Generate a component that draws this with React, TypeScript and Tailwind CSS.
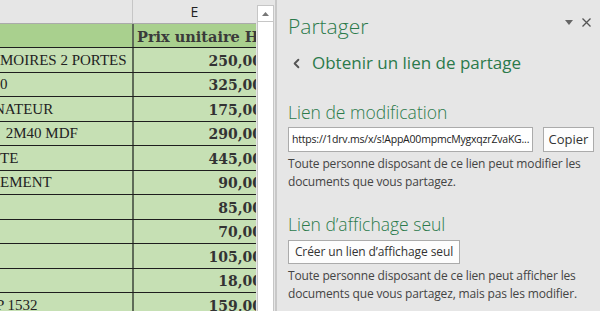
import React from 'react';
import { ChevronLeft } from 'lucide-react';

const serif = { fontFamily: '"DejaVu Serif", "Liberation Serif", serif' };
const times = { fontFamily: '"Liberation Serif", "DejaVu Serif", serif' };
const ui = { fontFamily: '"Open Sans", "Noto Sans", sans-serif' };

const rows = [
    { left: 'MOIRES 2 PORTES', shift: 'ml-0', price: '250,00', h: 'h-[25px]' },
    { left: '0', shift: 'ml-0', price: '325,00', h: 'h-[24px]' },
    { left: 'NATEUR', shift: 'ml-[-6px]', price: '175,00', h: 'h-[25px]' },
    { left: ' 2M40 MDF', shift: 'ml-[2px]', price: '290,00', h: 'h-[24px]' },
    { left: 'TE', shift: 'ml-0', price: '445,00', h: 'h-[25px]' },
    { left: 'EMENT', shift: 'ml-0', price: '90,00', h: 'h-[24px]' },
    { left: '', shift: 'ml-0', price: '85,00', h: 'h-[25px]' },
    { left: '', shift: 'ml-0', price: '70,00', h: 'h-[24px]' },
    { left: '', shift: 'ml-0', price: '105,00', h: 'h-[25px]' },
    { left: '', shift: 'ml-0', price: '18,00', h: 'h-[24px]' },
    { left: 'P 1532', shift: 'ml-[-4px]', price: '159,00', h: 'h-[25px]' },
];

const Sheet: React.FC = () => (
    <div className="w-[256px] shrink-0 flex flex-col">
        <div className="h-[24px] shrink-0 flex border-b border-[#ababab] bg-[#e6e6e6]">
            <div className="w-[133px] border-r border-[#c6c6c6]" />
            <div className="flex-1 flex items-center justify-center text-[14px] text-[#222]" style={ui}>E</div>
        </div>
        <div className="h-[24px] shrink-0 flex border-b border-[#1e1e1e] bg-[#a9d08e]">
            <div className="w-[132px]" />
            <div className="w-[2px] bg-[#5e6b58]" />
            <div className="flex-1 overflow-hidden flex items-end pb-[3px] pl-[3px]">
                <span className="whitespace-nowrap font-bold text-[14.5px] text-[#3a3a3a] leading-none" style={serif}>Prix unitaire HT</span>
            </div>
        </div>
        {rows.map((r, i) => (
            <div key={i} className={`${r.h} shrink-0 flex border-b border-[#1e1e1e] bg-[#c6e0b4]`}>
                <div className="w-[132px] overflow-hidden flex items-end pb-[4px]">
                    <span className={`${r.shift} whitespace-pre text-[15px] text-[#222] leading-none`} style={times}>{r.left}</span>
                </div>
                <div className="w-[2px] bg-[#5e6b58]" />
                <div className="flex-1 overflow-hidden flex items-end pb-[4px]">
                    <div className="w-[128px] shrink-0 text-right font-bold text-[14px] text-[#333] leading-none" style={serif}>{r.price}</div>
                </div>
            </div>
        ))}
    </div>
);

const Panel: React.FC = () => (
    <div className="flex-1 flex flex-col pl-[11px] pr-[7px] text-[#444]" style={ui}>
        <div className="flex items-start justify-between h-[46px] pt-[12px]">
            <div className="text-[21px] font-light leading-[28px] text-[#2b7a4b]">Partager</div>
            <div className="flex items-center gap-[9px] pt-[6px] pr-[3px]">
                <svg width="8" height="5" viewBox="0 0 8 5"><path d="M0 0h8L4 5z" fill="#666" /></svg>
                <svg width="9" height="9" viewBox="0 0 9 9"><path d="M0.5 0.5l8 8M8.5 0.5l-8 8" stroke="#555" strokeWidth="1.3" /></svg>
            </div>
        </div>
        <div className="mt-[3px] flex items-center h-[28px]">
            <ChevronLeft className="w-[15px] h-[15px] ml-[1px] text-[#555]" strokeWidth={3} />
            <span className="ml-[8px] text-[17px] leading-[24px] text-[#2b7a4b]">Obtenir un lien de partage</span>
        </div>
        <div className="mt-[22px] text-[17.5px] font-light leading-[26px] text-[#2b7a4b]">Lien de modification</div>
        <div className="mt-[2px] flex gap-[10px]">
            <div className="w-[245px] h-[25px] bg-white border border-[#ababab] flex items-center pl-[3px] overflow-hidden">
                <span className="whitespace-nowrap text-[10.5px] tracking-[-0.2px] text-[#222]">https://1drv.ms/x/s!AppA00mpmcMygxqzrZvaKG...</span>
            </div>
            <div className="w-[51px] h-[25px] bg-[#fdfdfd] border border-[#ababab] flex items-center justify-center text-[13px] text-[#333]">Copier</div>
        </div>
        <p className="mt-[3px] text-[12px] leading-[18px] tracking-[-0.15px] text-[#444]">Toute personne disposant de ce lien peut modifier les documents que vous partagez.</p>
        <div className="mt-[20px] text-[17.5px] font-light leading-[26px] text-[#2b7a4b]">Lien d’affichage seul</div>
        <div className="mt-[3px] w-[172px] h-[24px] bg-[#fdfdfd] border border-[#ababab] flex items-center justify-center text-[12px] tracking-[-0.1px] text-[#333] whitespace-nowrap">Créer un lien d’affichage seul</div>
        <p className="mt-[3px] text-[12px] leading-[18px] tracking-[-0.15px] text-[#444]">Toute personne disposant de ce lien peut afficher les documents que vous partagez, mais pas les modifier.</p>
    </div>
);

export default function App() {
    return (
        <div className="w-[600px] h-[311px] flex overflow-hidden bg-[#e6e6e6]">
            <Sheet />
            <div className="w-[19px] shrink-0 pl-[1px] pt-[5px]">
                <div className="w-[17px] h-full bg-white border border-[#c6c6c6] border-b-0">
                    <div className="h-[16px] border-b border-[#c6c6c6] flex items-center justify-center">
                        <svg width="7" height="4" viewBox="0 0 7 4"><path d="M0 4L3.5 0L7 4z" fill="#777" /></svg>
                    </div>
                </div>
            </div>
            <div className="w-[2px] shrink-0 bg-[#c8c8c8]" />
            <Panel />
        </div>
    );
}
